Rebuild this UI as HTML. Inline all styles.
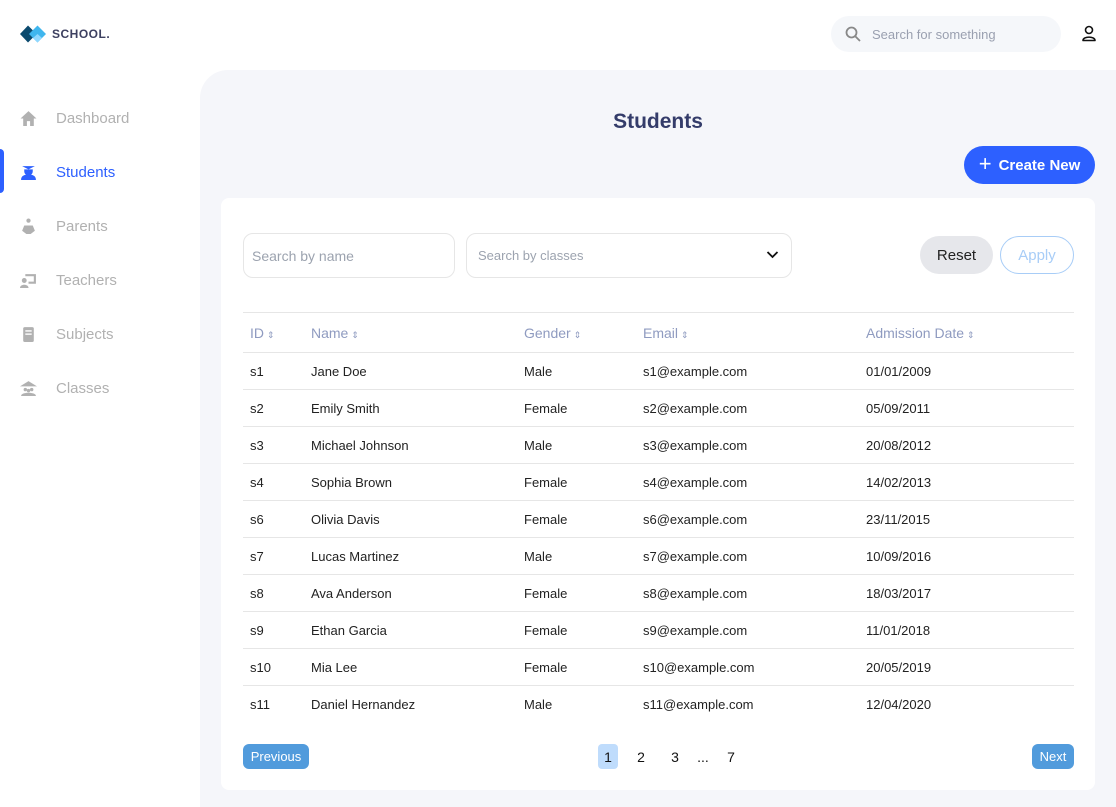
<!DOCTYPE html>
<html><head><meta charset="utf-8"><style>
*{box-sizing:border-box;margin:0;padding:0}
body{width:1116px;height:807px;background:#fff;font-family:"Liberation Sans",sans-serif;position:relative;overflow:hidden}
.logo{position:absolute;left:20px;top:24px;display:flex;align-items:center}
.logo span{font-size:12px;font-weight:bold;color:#3d4060;margin-left:4px;letter-spacing:0.5px}
.nav{position:absolute;left:0;top:91px;width:200px}
.nav div{height:54px;display:flex;align-items:center;padding-left:20px;font-size:15px;color:#b1b1b1;position:relative}
.nav div svg{width:17px;height:17px;margin-right:19px}
.nav div.act{color:#2d60ff}
.bar{position:absolute;left:0;top:149px;width:4px;height:44px;background:#2d60ff;border-radius:0 6px 6px 0}
.search{position:absolute;left:831px;top:16px;width:230px;height:36px;background:#f5f7fa;border-radius:18px;display:flex;align-items:center;padding-left:14px;font-size:13px;color:#9aa0b0}
.main{position:absolute;left:200px;top:70px;width:916px;height:737px;background:#f5f6fa;border-top-left-radius:28px}
h1{position:absolute;left:0;width:916px;top:40px;text-align:center;font-size:21px;color:#343c6a;font-weight:bold}
.create{position:absolute;left:764px;top:76px;width:131px;height:38px;background:#2d60ff;border-radius:19px;color:#fff;font-size:15px;font-weight:bold;display:flex;align-items:center;justify-content:center}
.card{position:absolute;left:21px;top:128px;width:874px;height:592px;background:#fff;border-radius:8px}
.inp{position:absolute;top:35px;height:45px;border:1px solid #e6e6e6;border-radius:10px;display:flex;align-items:center;padding-left:8px;color:#9ca3af}
.btn{position:absolute;top:38px;height:38px;border-radius:19px;display:flex;align-items:center;justify-content:center;font-size:15px}
table{position:absolute;left:22px;top:114px;width:831px;border-collapse:collapse;font-size:13px}
th{height:40px;text-align:left;font-weight:normal;color:#8f9bc0;font-size:14px;border-top:1px solid #e6e6e6;border-bottom:1px solid #e6e6e6;padding-left:7px}
td{height:37px;border-bottom:1px solid #e6e6e6;padding-left:7px;color:#222}
tr:last-child td{border-bottom:none}
th small{font-size:9px;margin-left:3px}
.pg{position:absolute;top:546px;height:25px;border-radius:6px;background:#519bdc;color:#fff;font-size:13px;display:flex;align-items:center;justify-content:center}
.pn{position:absolute;top:546px;height:25px;font-size:14px;color:#111;display:flex;align-items:center;justify-content:center}
</style></head><body>
<div class="logo"><svg width="28" height="20" viewBox="0 0 28 20"><path d="M0 10L8 1.5L16.5 10L8 18.5Z" fill="#0b4a6e"/><path d="M9 10L17.5 1.5L26 10L17.5 18.5Z" fill="#3fb6ee"/><path d="M13 14L17.5 10L22 14L17.5 18.5Z" fill="#8fd8ff"/></svg><span>SCHOOL.</span></div>
<div class="bar"></div>
<div class="nav">
<div><svg viewBox="0 0 16 16"><path d="M8 1L0.5 8H3V15H6.5V10.5H9.5V15H13V8H15.5Z" fill="#b1b1b1"/></svg>Dashboard</div>
<div class="act"><svg viewBox="0 0 16 16"><path d="M2 2H14L8 5Z M4 5H12V7A4 4 0 0 1 4 7Z M1 15C1 11 4 10 8 10C12 10 15 11 15 15Z" fill="#2d60ff"/></svg>Students</div>
<div><svg viewBox="0 0 16 16"><circle cx="8" cy="2.5" r="2" fill="#b1b1b1"/><path d="M4 7H12L14 12L10 15H6L2 12Z" fill="#b1b1b1"/></svg>Parents</div>
<div><svg viewBox="0 0 16 16"><path d="M5 2H15V11H8V9H13V4H5Z" fill="#b1b1b1"/><circle cx="4" cy="8" r="2.3" fill="#b1b1b1"/><path d="M0 15C0 11 8 11 8 15Z" fill="#b1b1b1"/></svg>Teachers</div>
<div><svg viewBox="0 0 16 16"><rect x="3" y="1" width="10" height="14" rx="1.5" fill="#b1b1b1"/><rect x="5" y="4" width="6" height="1.3" fill="#fff"/><rect x="5" y="7" width="6" height="1.3" fill="#fff"/></svg>Subjects</div>
<div><svg viewBox="0 0 16 16"><path d="M8 1L0 6H16Z" fill="#b1b1b1"/><circle cx="5" cy="9" r="1.6" fill="#b1b1b1"/><circle cx="11" cy="9" r="1.6" fill="#b1b1b1"/><circle cx="8" cy="10" r="1.6" fill="#b1b1b1"/><path d="M1 15C1 11 15 11 15 15Z" fill="#b1b1b1"/></svg>Classes</div>
</div>
<div class="search"><svg width="16" height="16" viewBox="0 0 16 16" style="margin-right:11px"><circle cx="6.5" cy="6.5" r="5" fill="none" stroke="#888" stroke-width="1.8"/><path d="M10.5 10.5L15 15" stroke="#888" stroke-width="1.8"/></svg>Search for something</div>
<svg style="position:absolute;left:1081px;top:25px" width="16" height="17" viewBox="0 0 16 17"><circle cx="8" cy="5" r="3.5" fill="none" stroke="#111" stroke-width="1.6"/><path d="M2 15.5C2 11 14 11 14 15.5Z" fill="none" stroke="#111" stroke-width="1.6" stroke-linejoin="round"/></svg>
<div class="main">
<h1>Students</h1>
<div class="create"><span style="font-size:22px;font-weight:normal;margin-right:7px;margin-top:-3px">+</span>Create New</div>
<div class="card">
<div class="inp" style="left:22px;width:212px;font-size:14px">Search by name</div>
<div class="inp" style="left:245px;width:326px;font-size:13px;padding-left:11px">Search by classes<svg style="position:absolute;right:12px;top:16px" width="13" height="10" viewBox="0 0 13 10"><path d="M1.5 2L6.5 7L11.5 2" fill="none" stroke="#111" stroke-width="1.8"/></svg></div>
<div class="btn" style="left:699px;width:73px;background:#e6e7eb;color:#222">Reset</div>
<div class="btn" style="left:779px;width:74px;border:1.5px solid #a8cdf7;color:#a8cdf7">Apply</div>
<table>
<tr><th style="width:61px">ID<small>⇕</small></th><th style="width:213px">Name<small>⇕</small></th><th style="width:119px">Gender<small>⇕</small></th><th style="width:223px">Email<small>⇕</small></th><th>Admission Date<small>⇕</small></th></tr>
<tr><td>s1</td><td>Jane Doe</td><td>Male</td><td>s1@example.com</td><td>01/01/2009</td></tr>
<tr><td>s2</td><td>Emily Smith</td><td>Female</td><td>s2@example.com</td><td>05/09/2011</td></tr>
<tr><td>s3</td><td>Michael Johnson</td><td>Male</td><td>s3@example.com</td><td>20/08/2012</td></tr>
<tr><td>s4</td><td>Sophia Brown</td><td>Female</td><td>s4@example.com</td><td>14/02/2013</td></tr>
<tr><td>s6</td><td>Olivia Davis</td><td>Female</td><td>s6@example.com</td><td>23/11/2015</td></tr>
<tr><td>s7</td><td>Lucas Martinez</td><td>Male</td><td>s7@example.com</td><td>10/09/2016</td></tr>
<tr><td>s8</td><td>Ava Anderson</td><td>Female</td><td>s8@example.com</td><td>18/03/2017</td></tr>
<tr><td>s9</td><td>Ethan Garcia</td><td>Female</td><td>s9@example.com</td><td>11/01/2018</td></tr>
<tr><td>s10</td><td>Mia Lee</td><td>Female</td><td>s10@example.com</td><td>20/05/2019</td></tr>
<tr><td>s11</td><td>Daniel Hernandez</td><td>Male</td><td>s11@example.com</td><td>12/04/2020</td></tr>
</table>
<div class="pg" style="left:22px;width:66px">Previous</div>
<div class="pn" style="left:377px;width:20px;background:#bfdcfc;border-radius:4px">1</div>
<div class="pn" style="left:410px;width:20px">2</div>
<div class="pn" style="left:444px;width:20px">3</div>
<div class="pn" style="left:472px;width:20px">...</div>
<div class="pn" style="left:500px;width:20px">7</div>
<div class="pg" style="left:811px;width:42px">Next</div>
</div>
</div>
</body></html>
